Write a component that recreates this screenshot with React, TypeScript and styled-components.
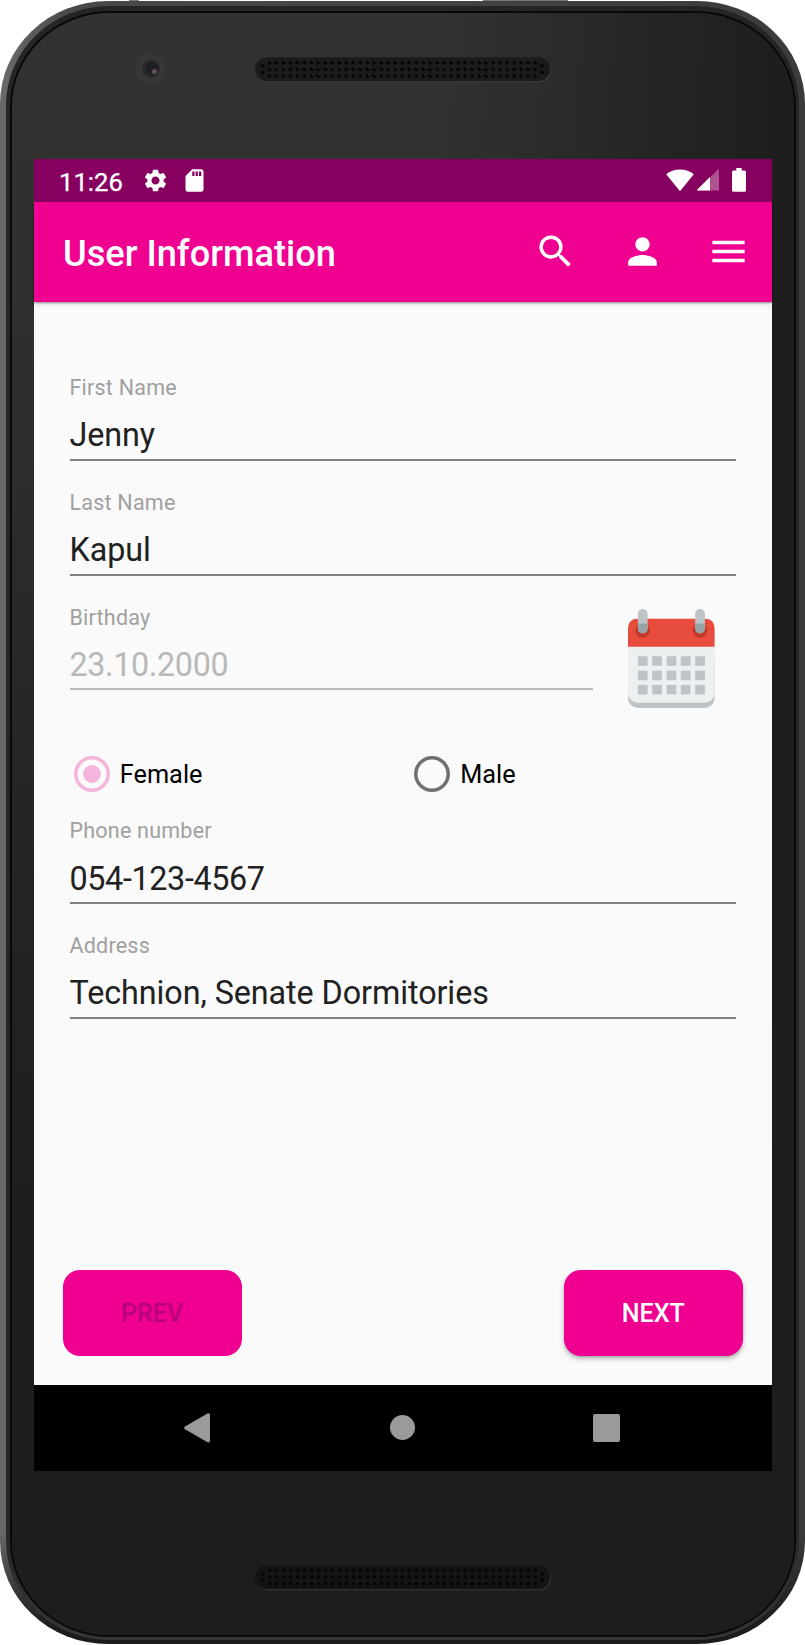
import React from 'react';
import styled, { createGlobalStyle } from 'styled-components';
import { MdMenu, MdPerson, MdSdCard, MdSearch, MdSettings } from 'react-icons/md';

const pink = '#f00091';

const GlobalStyle = createGlobalStyle`
  * { box-sizing: border-box; }
  body { margin: 0; background: #fff; font-family: Roboto, sans-serif; }
  svg { display: block; flex: none; }
`;

const Page = styled.div`
  width: 805px;
  height: 1645px;
  position: relative;
  overflow: hidden;
  padding-top: 1px;
`;

const SideKey = styled.div<{ $left: number; $width: number }>`
  position: absolute;
  top: 0;
  left: ${(p) => p.$left}px;
  width: ${(p) => p.$width}px;
  height: 2px;
  background: #777;
`;

const Rim = styled.div`
  position: relative;
  height: 1642.5px;
  padding: 5px 6px 4px;
  border-radius: 108px / 103px;
  background:
    linear-gradient(to bottom, transparent 1530px, #1b1b1b 1630px),
    linear-gradient(to right, #6a6a6a 0, #656565 12px, #484848 70px, #444 50%, #3c3a3b 100%);
`;

const Band = styled.div`
  height: 100%;
  padding: 7px 5.5px 5px 6px;
  border-radius: 103px / 99px;
  background: linear-gradient(to bottom, #262425 0, #262526 1500px, #353535 1632px);
`;

const Face = styled.div`
  height: 100%;
  display: flex;
  flex-direction: column;
  padding: 0 22px;
  border-radius: 98px / 94px;
  box-shadow: 0 0 0 2px #080808;
  background:
    linear-gradient(to right, transparent 55%, #1d1d1d 100%),
    linear-gradient(to bottom, #323232 0, #2f2f2e 300px, #262524 800px, #1e1e1e 1200px, #1d1d1d 100%);
`;

const TopBezel = styled.div`
  flex: 0 0 146px;
  display: flex;
  align-items: flex-start;
  padding: 40px 0 0 99.5px;
`;

const GrilleSlot = styled.div`
  margin: 3.5px 0 0 89.5px;
`;

const Screen = styled.main`
  width: 738px;
  height: 1311.7px;
  flex: none;
  display: flex;
  flex-direction: column;
  background: #fafafa;
`;

const StatusBar = styled.div`
  flex: 0 0 42.7px;
  display: flex;
  align-items: center;
  padding: 0 26px 0 25px;
  background: #88005f;
  color: #fff;
`;

const Clock = styled.span`
  width: 83px;
  padding-top: 4px;
  font-size: 25.7px;
  line-height: 30px;
  -webkit-text-stroke: 0.25px #fff;
`;

const StatusIcons = styled.div`
  display: flex;
  gap: 12px;
  margin-right: auto;
`;

const AppBar = styled.header`
  flex: 0 0 100.3px;
  display: flex;
  align-items: center;
  justify-content: space-between;
  padding: 0 22px 0 29px;
  background: ${pink};
  color: #fff;
  box-shadow: 0 1px 2px rgba(0, 0, 0, 0.4), 0 3px 5px rgba(0, 0, 0, 0.08);
`;

const Title = styled.h1`
  margin: 4px 0 0;
  font-size: 36.2px;
  font-weight: 500;
  line-height: 42px;
`;

const Actions = styled.div`
  display: flex;
  gap: 43.5px;
`;

const Form = styled.form`
  flex: 1;
  display: flex;
  flex-direction: column;
  padding: 44px 36px 0 35.5px;
`;

const Field = styled.label<{ $disabled?: boolean }>`
  flex: 0 0 auto;
  height: 114.8px;
  padding-top: 29px;
  display: flex;
  flex-direction: column;
  border-bottom: 2px solid ${(p) => (p.$disabled ? '#bababa' : '#808080')};
`;

const Caption = styled.span`
  font-size: 21.5px;
  line-height: 26px;
  letter-spacing: 0.22px;
  color: #a0a0a0;
`;

const Value = styled.span<{ $disabled?: boolean; $numeric?: boolean }>`
  margin-top: 15.5px;
  font-size: 32.3px;
  line-height: 38px;
  letter-spacing: ${(p) => (p.$numeric ? '-0.35px' : '-0.07px')};
  white-space: nowrap;
  color: ${(p) => (p.$disabled ? '#b8b8b8' : '#212121')};
`;

const BirthdayRow = styled.div`
  display: flex;
  align-items: flex-start;
  height: 114.8px;
`;

const BirthdayField = styled.div`
  width: 523.5px;
`;

const CalendarButton = styled.div`
  margin: 33px 0 0 35px;
`;

const RadioRow = styled.div`
  display: flex;
  height: 98.8px;
  padding: 65.8px 0 0 4.3px;
`;

const Radio = styled.div`
  flex: none;
  width: 340.4px;
  height: 36px;
  display: flex;
  align-items: center;
  font-size: 25.3px;
  line-height: 30px;
  color: #000;
`;

const RadioLabel = styled.span`
  padding: 2px 0 0 10px;
`;

const ButtonRow = styled.div`
  display: flex;
  justify-content: space-between;
  padding: 0 29px 29.3px;
`;

const Button = styled.button<{ $disabled?: boolean }>`
  width: 179.3px;
  height: 86px;
  padding: ${(p) => (p.$disabled ? '3px 1px 0 0' : '3px 0 0')};
  border: 0;
  border-radius: 17px;
  background: ${pink};
  font: 500 25.1px/30px Roboto, sans-serif;
  color: ${(p) => (p.$disabled ? '#b8007a' : '#fff')};
  box-shadow: ${(p) => (p.$disabled ? 'none' : '0 3px 5px rgba(0, 0, 0, 0.25), 0 1px 2px rgba(0, 0, 0, 0.15)')};
`;

const NavBar = styled.nav`
  flex: 0 0 85.9px;
  display: flex;
  align-items: center;
  padding-left: 150px;
  background: #000;
  color: #9a9a9a;
`;

const NavHome = styled.div`
  width: 25.4px;
  height: 25.4px;
  margin: 0 177.6px 0 180px;
  border-radius: 50%;
  background: currentColor;
`;

const NavRecents = styled.div`
  width: 27.3px;
  height: 27.7px;
  border-radius: 2px;
  background: currentColor;
`;

const BottomBezel = styled.div`
  flex: 1;
  display: flex;
  justify-content: center;
  padding: 94px 0 0 1px;
`;

const Camera = () => (
  <svg width="32" height="32" viewBox="0 0 32 32">
    <circle cx="16" cy="16" r="15.3" fill="#373738" />
    <circle cx="17" cy="15.7" r="9" fill="#29272b" />
    <circle cx="18" cy="15.5" r="6.5" fill="#201d22" />
    <circle cx="20.5" cy="18.6" r="3" fill="#4b3a42" />
    <circle cx="20.2" cy="18.6" r="1.2" fill="#8b707a" />
  </svg>
);

const Grille = ({ dark }: { dark?: boolean }) => {
  const columns = Array.from({ length: 39 }, (_, i) => 14.6 + i * 6.99);
  const rows = [5.4, 12.2, 19];
  const ends: [number, number][] = [[7.6, 8.8], [7.6, 15.4], [287, 8.8], [287, 15.4]];
  return (
    <svg width="297" height="26" viewBox="0 0 297 26">
      <rect x="1" y="1.2" width="295" height="24" rx="12" fill={dark ? '#3a3a3a' : '#414141'} />
      <rect x="0" y="0.3" width="295.3" height="24" rx="12" fill={dark ? '#141414' : '#1b1b1b'} />
      {rows.map((y) => columns.map((x) => <circle key={`${x}-${y}`} cx={x} cy={y} r="1.9" fill="#060606" />))}
      {ends.map(([x, y]) => <circle key={`${x}-${y}`} cx={x} cy={y} r="1.9" fill="#060606" />)}
      {!dark && rows.map((y) => columns.map((x) => (
        <circle key={`h${x}-${y}`} cx={x + 1} cy={y - 1.3} r="0.6" fill="#3a3a3a" />
      )))}
    </svg>
  );
};

const WifiIcon = () => (
  <svg width="28" height="23" viewBox="0 0 28 23" fill="#fff">
    <path d="M0.2 5.3C4 2 8.600 0.500 14 0.500S24 2 27.800 5.300L14 22.300Z" />
  </svg>
);

const SignalIcon = () => (
  <svg width="22" height="22" viewBox="0 0 22 22" fill="#fff">
    <path d="M0 21.500L21 0.500Q22 0 22 1V21.500Z" opacity="0.32" />
    <path d="M0.300 20.500L13 8V21.500H0.800Q-0.200 21.500 0.300 20.500Z" />
  </svg>
);

const BatteryIcon = () => (
  <svg width="14" height="24" viewBox="0 0 14 24" fill="#fff">
    <path d="M4.300 0H9.700V2.400H12.500Q14 2.400 14 3.900V22.300Q14 23.800 12.500 23.800H1.500Q0 23.800 0 22.300V3.900Q0 2.400 1.500 2.400H4.300Z" />
  </svg>
);

const SystemIcons = styled.div`
  display: flex;
  align-items: center;
  svg + svg { margin-left: 3.5px; }
  svg + svg + svg { margin-left: 13px; }
`;

const CalendarIcon = () => (
  <svg width="87" height="99" viewBox="0 0 87 99">
    <rect y="40" width="86.600" height="59" rx="10" fill="#bdc3c7" />
    <rect y="20" width="86.600" height="73.800" rx="10" fill="#ecf0f1" />
    <path d="M0 37.800V19.500Q0 9.700 9.800 9.700H76.800Q86.600 9.700 86.600 19.500V37.800Z" fill="#e74c3c" />
    {[14.700, 72].map((cx) => (
      <g key={cx}>
        <circle cx={cx} cy="21.600" r="7.200" fill="#c0392b" />
        <rect x={cx - 4.800} y="0" width="9.700" height="24.300" rx="4.800" fill="#bdc3c7" />
        <path d={`M${cx - 4.8} 14.600h9.700v4.900a4.850 4.850 0 0 1-9.700 0z`} fill="#95a5a6" />
      </g>
    ))}
    {[47.300, 61.700, 75.900].map((y) =>
      [9.900, 24.200, 38.600, 52.800, 67.200].map((x) => (
        <rect key={`${x}-${y}`} x={x} y={y} width="9.700" height="9.500" fill="#bdc3c7" />
      )),
    )}
  </svg>
);

const RadioMark = ({ checked }: { checked?: boolean }) => (
  <svg width="36" height="36" viewBox="0 0 36 36">
    <circle cx="18" cy="18" r="16.200" fill="none" stroke={checked ? '#f5b5da' : '#707070'} strokeWidth="3.500" />
    {checked && <circle cx="18" cy="18" r="8.900" fill="#f5b5da" />}
  </svg>
);

const BackIcon = () => (
  <svg width="26" height="30" viewBox="0 0 26 30" fill="currentColor">
    <path d="M1 13.400L23.500 0.400Q26 -0.400 26 2V27.500Q26 30 23.500 29.200L1 16.200Q-0.800 14.800 1 13.400Z" />
  </svg>
);

interface TextFieldProps {
  label: string;
  value: string;
  disabled?: boolean;
  numeric?: boolean;
}

const TextField = ({ label, value, disabled, numeric }: TextFieldProps) => (
  <Field $disabled={disabled}>
    <Caption>{label}</Caption>
    <Value $disabled={disabled} $numeric={numeric}>{value}</Value>
  </Field>
);

export default function App() {
  return (
    <Page>
      <GlobalStyle />
      <SideKey $left={129} $width={10} />
      <SideKey $left={483} $width={85} />
      <Rim>
        <Band>
          <Face>
            <TopBezel>
              <Camera />
              <GrilleSlot>
                <Grille />
              </GrilleSlot>
            </TopBezel>
            <Screen>
              <StatusBar>
                <Clock>11:26</Clock>
                <StatusIcons>
                  <MdSettings size={27} />
                  <MdSdCard size={27} />
                </StatusIcons>
                <SystemIcons>
                  <WifiIcon />
                  <SignalIcon />
                  <BatteryIcon />
                </SystemIcons>
              </StatusBar>
              <AppBar>
                <Title>User Information</Title>
                <Actions>
                  <MdSearch size={43} />
                  <MdPerson size={43} />
                  <MdMenu size={43} />
                </Actions>
              </AppBar>
              <Form>
                <TextField label="First Name" value="Jenny" />
                <TextField label="Last Name" value="Kapul" />
                <BirthdayRow>
                  <BirthdayField>
                    <TextField label="Birthday" value="23.10.2000" disabled numeric />
                  </BirthdayField>
                  <CalendarButton>
                    <CalendarIcon />
                  </CalendarButton>
                </BirthdayRow>
                <RadioRow>
                  <Radio>
                    <RadioMark checked />
                    <RadioLabel>Female</RadioLabel>
                  </Radio>
                  <Radio>
                    <RadioMark />
                    <RadioLabel>Male</RadioLabel>
                  </Radio>
                </RadioRow>
                <TextField label="Phone number" value="054-123-4567" numeric />
                <TextField label="Address" value="Technion, Senate Dormitories" />
              </Form>
              <ButtonRow>
                <Button $disabled>PREV</Button>
                <Button>NEXT</Button>
              </ButtonRow>
              <NavBar>
                <BackIcon />
                <NavHome />
                <NavRecents />
              </NavBar>
            </Screen>
            <BottomBezel>
              <Grille dark />
            </BottomBezel>
          </Face>
        </Band>
      </Rim>
    </Page>
  );
}
